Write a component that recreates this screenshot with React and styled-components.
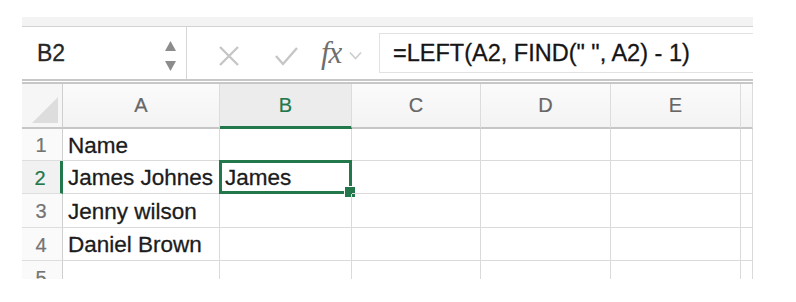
import React from 'react'
import styled, { createGlobalStyle } from 'styled-components'

const GREEN = '#22784a'

const GlobalStyle = createGlobalStyle`
  html, body {
    margin: 0;
    padding: 0;
    background: #ffffff;
  }
  body {
    font-family: "Liberation Sans", Arial, Helvetica, sans-serif;
    color: #222;
  }
`

const Page = styled.div`
  width: 731px;
  padding: 17px 0 0 22px;
`

const TopStrip = styled.div`
  height: 9px;
  background: #f3f3f3;
  border-bottom: 1px solid #d2d2d2;
`

const FormulaBar = styled.div`
  display: flex;
  align-items: stretch;
  height: 52px;
  border-bottom: 5px double #c7c7c7;
`

const NameBox = styled.div`
  width: 165px;
  display: flex;
  align-items: center;
  justify-content: space-between;
  padding: 0 9px 0 15px;
  box-sizing: border-box;
  border-right: 1px solid #d6d6d6;
  font-size: 23px;
  color: #262626;
  -webkit-text-stroke: 0.3px #262626;
`

const Spinner = styled.svg`
  width: 13px;
  height: 34px;
  margin-top: 6px;
`

const Tools = styled.div`
  display: flex;
  align-items: center;
  padding-top: 5px;
  width: 192px;
  box-sizing: border-box;
`

const ToolIcon = styled.svg`
  flex: none;
  margin-left: ${p => p.$gap}px;
`

const Fx = styled.span`
  font-family: "Liberation Serif", "Times New Roman", serif;
  font-style: italic;
  font-size: 31px;
  color: #6e6e6e;
  margin-left: 22px;
  margin-top: -5px;
  letter-spacing: -1px;
`

const FormulaInput = styled.div`
  flex: 1;
  display: flex;
  align-items: center;
  margin: 6px 0 6px 0;
  padding-left: 13px;
  border: 1px solid #e2e2e2;
  border-right: none;
  font-size: 23.5px;
  color: #151515;
  -webkit-text-stroke: 0.3px #151515;
  white-space: pre;
`

const Grid = styled.div`
  display: grid;
  grid-template-columns: 41px 157px 132px 129px 130px 130px 12px;
  grid-template-rows: 45px 32px 33px 34px 33px 33px;
  height: 195px;
  overflow: hidden;
`

const Corner = styled.div`
  position: relative;
  background: #f6f6f6;
  border-right: 1px solid #cfcfcf;
  border-bottom: 2px solid #c6c6c6;
  box-sizing: border-box;
  &::after {
    content: '';
    position: absolute;
    right: 4px;
    bottom: 4px;
    width: 0;
    height: 0;
    border-left: 26px solid transparent;
    border-bottom: 26px solid #dddddd;
  }
`

const ColHead = styled.div`
  display: flex;
  align-items: center;
  justify-content: center;
  box-sizing: border-box;
  background: ${p => (p.$active ? '#ececec' : 'linear-gradient(#fbfbfb, #f3f3f3)')};
  border-right: 1px solid #dcdcdc;
  border-bottom: ${p => (p.$active ? `3px solid ${GREEN}` : '2px solid #c6c6c6')};
  padding-top: ${p => (p.$active ? '1px' : '0')};
  color: ${p => (p.$active ? GREEN : '#666666')};
  -webkit-text-stroke: 0.2px ${p => (p.$active ? GREEN : '#666666')};
  font-size: 20px;
`

const RowHead = styled.div`
  display: flex;
  align-items: center;
  justify-content: center;
  box-sizing: border-box;
  padding: 2px 2px 0 0;
  background: ${p => (p.$active ? '#f1f1f1' : '#fafafa')};
  border-right: ${p => (p.$active ? `3px solid ${GREEN}` : '1px solid #cfcfcf')};
  border-bottom: 1px solid #dedede;
  color: ${p => (p.$active ? GREEN : '#747474')};
  -webkit-text-stroke: 0.2px ${p => (p.$active ? GREEN : '#747474')};
  font-size: 20px;
`

const Cell = styled.div`
  position: relative;
  display: flex;
  align-items: center;
  box-sizing: border-box;
  padding: 2px 0 0 5px;
  border-right: 1px solid #dadada;
  border-bottom: 1px solid #dadada;
  font-size: 22.5px;
  color: #1c1c1c;
  -webkit-text-stroke: 0.3px #1c1c1c;
  white-space: nowrap;
`

const Selection = styled.div`
  position: absolute;
  left: -1px;
  top: -1px;
  right: -1px;
  bottom: -1px;
  border: 3px solid ${GREEN};
  pointer-events: none;
`

const FillHandle = styled.div`
  position: absolute;
  right: -7px;
  bottom: -7px;
  width: 10px;
  height: 10px;
  background: ${GREEN};
  border: 1px solid #ffffff;
`

const columns = ['A', 'B', 'C', 'D', 'E', '']
const rows = [
  ['Name', ''],
  ['James Johnes', 'James'],
  ['Jenny wilson', ''],
  ['Daniel Brown', ''],
  ['', ''],
]

export default function App() {
  return (
    <>
      <GlobalStyle />
      <Page>
        <TopStrip />
        <FormulaBar>
          <NameBox>
            B2
            <Spinner viewBox="0 0 13 34">
              <path d="M1 12 L6.5 2 L12 12 Z" fill="#8c8c8c" />
              <path d="M1 22 L6.5 32 L12 22 Z" fill="#8c8c8c" />
            </Spinner>
          </NameBox>
          <Tools>
            <ToolIcon $gap={31} width="22" height="22" viewBox="0 0 22 22">
              <path d="M2 2 L20 20 M20 2 L2 20" stroke="#c6c6c6" strokeWidth="2.4" fill="none" />
            </ToolIcon>
            <ToolIcon $gap={34} width="25" height="22" viewBox="0 0 25 22">
              <path d="M2 11 L9 19 L23 3" stroke="#c6c6c6" strokeWidth="2.4" fill="none" />
            </ToolIcon>
            <Fx>fx</Fx>
            <ToolIcon $gap={8} width="13" height="9" viewBox="0 0 13 9">
              <path d="M1 1.5 L6.5 7.5 L12 1.5" stroke="#cdcdcd" strokeWidth="1.6" fill="none" />
            </ToolIcon>
          </Tools>
          <FormulaInput>{'=LEFT(A2, FIND(" ", A2) - 1)'}</FormulaInput>
        </FormulaBar>
        <Grid>
          <Corner />
          {columns.map((c, i) => (
            <ColHead key={i} $active={c === 'B'}>{c}</ColHead>
          ))}
          {rows.map((r, ri) => (
            <React.Fragment key={ri}>
              <RowHead $active={ri === 1}>{ri + 1}</RowHead>
              {columns.map((c, ci) => (
                <Cell key={ci}>
                  {r[ci] || ''}
                  {ri === 1 && ci === 1 && (
                    <Selection>
                      <FillHandle />
                    </Selection>
                  )}
                </Cell>
              ))}
            </React.Fragment>
          ))}
        </Grid>
      </Page>
    </>
  )
}
